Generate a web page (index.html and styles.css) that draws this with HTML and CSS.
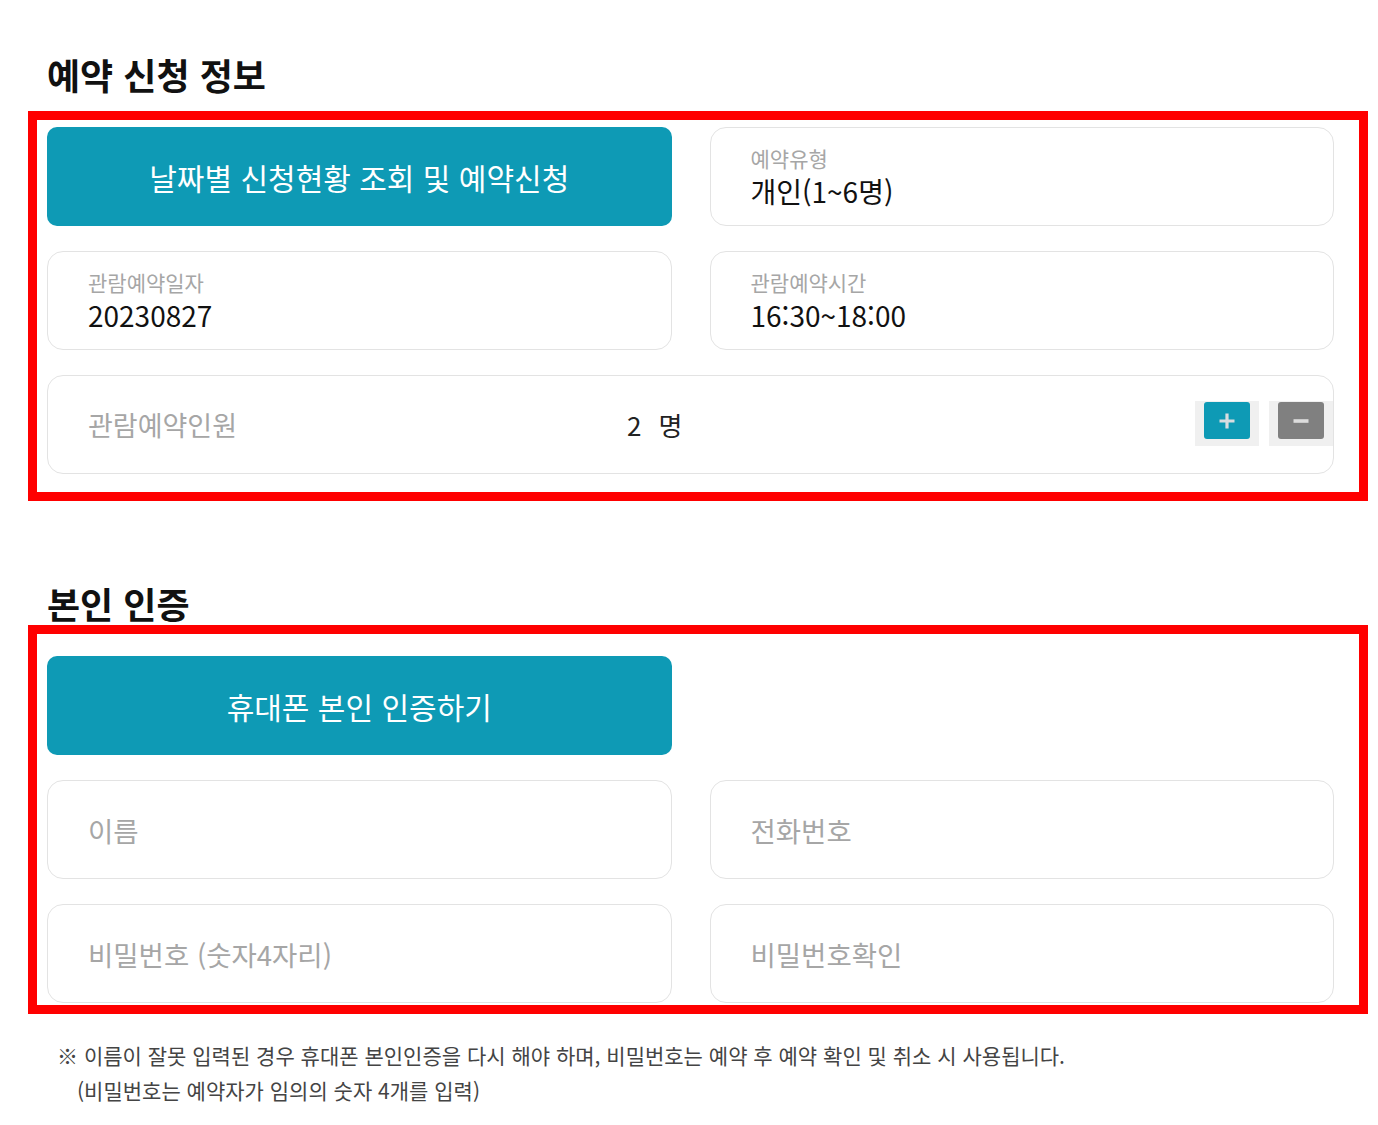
FILE: index.html
```html
<!DOCTYPE html>
<html lang="ko">
<head>
<meta charset="utf-8">
<title>예약 신청</title>
<link rel="stylesheet" href="styles.css">
</head>
<body>
<main class="page">
  <h2 class="section-title title-reserve">예약 신청 정보</h2>
  <section class="frame frame-reserve">
    <div class="form-grid">
      <button type="button" class="primary-btn">날짜별 신청현황 조회 및 예약신청</button>
      <div class="field">
        <span class="field-label">예약유형</span>
        <span class="field-value">개인(1~6명)</span>
      </div>
      <div class="field">
        <span class="field-label">관람예약일자</span>
        <span class="field-value">20230827</span>
      </div>
      <div class="field">
        <span class="field-label">관람예약시간</span>
        <span class="field-value">16:30~18:00</span>
      </div>
      <div class="field field-wide stepper">
        <span class="stepper-label">관람예약인원</span>
        <span class="stepper-count">2</span>
        <span class="stepper-unit">명</span>
        <div class="stepper-btns">
          <button type="button" class="step-btn" aria-label="증가">
            <span class="step-face step-plus">
              <svg width="18" height="18" viewBox="0 0 18 18"><path d="M9 1.5v15M1.5 9h15" stroke="#d9dde0" stroke-width="3.2" fill="none"/></svg>
            </span>
          </button>
          <button type="button" class="step-btn" aria-label="감소">
            <span class="step-face step-minus">
              <svg width="18" height="18" viewBox="0 0 18 18"><path d="M1.5 9h15" stroke="#dcdcdc" stroke-width="3.6" fill="none"/></svg>
            </span>
          </button>
        </div>
      </div>
    </div>
  </section>

  <h2 class="section-title title-auth">본인 인증</h2>
  <section class="frame frame-auth">
    <div class="form-grid">
      <button type="button" class="primary-btn">휴대폰 본인 인증하기</button>
      <div class="grid-spacer"></div>
      <input class="field field-input" type="text" placeholder="이름">
      <input class="field field-input" type="tel" placeholder="전화번호">
      <input class="field field-input" type="password" placeholder="비밀번호 (숫자4자리)">
      <input class="field field-input" type="password" placeholder="비밀번호확인">
    </div>
  </section>

  <p class="notice">
    <span class="notice-line">※ 이름이 잘못 입력된 경우 휴대폰 본인인증을 다시 해야 하며, 비밀번호는 예약 후 예약 확인 및 취소 시 사용됩니다.</span>
    <span class="notice-line notice-sub">(비밀번호는 예약자가 임의의 숫자 4개를 입력)</span>
  </p>
</main>
</body>
</html>
```

FILE: styles.css
```css
* {
  box-sizing: border-box;
}

html, body {
  margin: 0;
  padding: 0;
  background: #ffffff;
}

body {
  font-family: "Noto Sans CJK KR", "Noto Sans", sans-serif;
  color: #111111;
}

.page {
  padding-top: 54px;
  width: 1378px;
}

.section-title {
  margin: 0 0 0 47px;
  font-size: 36px;
  font-weight: 700;
  line-height: 40px;
  color: #111111;
}

.title-reserve {
  margin-bottom: 17px;
}

.title-auth {
  margin-top: 82px;
  margin-bottom: 2px;
}

.frame {
  margin-left: 28px;
  width: 1340px;
  border: 9px solid #ff0000;
}

.frame-reserve {
  padding: 7px 25px 18px 10px;
}

.frame-auth {
  padding: 22px 25px 2px 10px;
}

.form-grid {
  display: grid;
  grid-template-columns: 1fr 1fr;
  grid-auto-rows: 99px;
  column-gap: 38px;
  row-gap: 25px;
}

.primary-btn {
  margin: 0;
  border: none;
  border-radius: 10px;
  background: #0e9ab5;
  color: #ffffff;
  font-family: "Noto Sans CJK KR", "Noto Sans", sans-serif;
  font-size: 30px;
  font-weight: 400;
  cursor: pointer;
}

.field {
  display: flex;
  flex-direction: column;
  justify-content: center;
  gap: 2px;
  padding: 0 40px;
  border: 1px solid #e3e3e3;
  border-radius: 16px;
  background: #ffffff;
}

.field-wide {
  grid-column: 1 / -1;
}

.field-label {
  font-size: 21px;
  line-height: 26px;
  color: #a6a6a6;
}

.field-value {
  font-size: 28px;
  line-height: 36px;
  color: #111111;
}

.stepper {
  flex-direction: row;
  align-items: center;
  justify-content: flex-start;
  gap: 0;
  padding-right: 0;
}

.stepper-label {
  width: 539px;
  font-size: 27px;
  line-height: 34px;
  color: #a6a6a6;
}

.stepper-count,
.stepper-unit {
  font-size: 26px;
  line-height: 34px;
  color: #222222;
}

.stepper-unit {
  margin-left: 17px;
}

.stepper-btns {
  margin-left: auto;
  display: flex;
  gap: 10px;
  margin-top: -2px;
}

.step-btn {
  margin: 0;
  padding: 1px 9px 7px 9px;
  border: none;
  background: #f0f0f0;
  cursor: pointer;
  display: flex;
}

.step-face {
  width: 46px;
  height: 37px;
  border-radius: 3px;
  display: flex;
  align-items: center;
  justify-content: center;
}

.step-plus {
  background: #0e9ab5;
}

.step-minus {
  background: #808080;
}

.field-input {
  font-family: "Noto Sans CJK KR", "Noto Sans", sans-serif;
  font-size: 27.5px;
  color: #222222;
  outline: none;
  width: 100%;
  height: 100%;
}

.field-input::placeholder {
  color: #a6a6a6;
}

.notice {
  margin: 24px 0 0 57px;
  font-size: 21px;
  line-height: 34.5px;
  color: #444444;
}

.notice-line {
  display: block;
}

.notice-sub {
  padding-left: 20px;
}
```
